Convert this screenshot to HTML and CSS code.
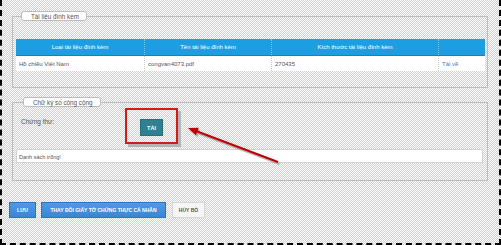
FILE: index.html
```html
<!DOCTYPE html>
<html lang="vi">
<head>
  <meta charset="UTF-8">
  <title>Chữ ký số</title>
  <link rel="stylesheet" href="styles.css">
</head>
<body>

  <div class="page">

    <fieldset class="group group-files">
      <legend>Tài liệu đính kèm</legend>
      <table class="files">
        <thead>
          <tr>
            <th class="c1">Loại tài liệu đính kèm</th>
            <th class="c2">Tên tài liệu đính kèm</th>
            <th class="c3">Kích thước tài liệu đính kèm</th>
            <th class="c4"></th>
          </tr>
        </thead>
        <tbody>
          <tr>
            <td>Hồ chiếu Việt Nam</td>
            <td>congvan4073.pdf</td>
            <td>270435</td>
            <td><a href="#">Tải về</a></td>
          </tr>
        </tbody>
      </table>
    </fieldset>

    <fieldset class="group group-sign">
      <legend>Chữ ký số công cộng</legend>
      <div class="cert-row">
        <span class="cert-label">Chứng thư:</span>
        <div class="highlight">
          <button class="btn-upload">TẢI</button>
        </div>
      </div>
      <div class="empty-list">Danh sách trống!</div>
    </fieldset>

    <div class="actions">
      <button class="btn btn-blue btn-save">LƯU</button>
      <button class="btn btn-blue btn-change">THAY ĐỔI GIẤY TỜ CHỨNG THỰC CÁ NHÂN</button>
      <button class="btn btn-cancel">HỦY BỎ</button>
    </div>

    <!-- callout arrow -->
    <svg class="arrow" width="501" height="245" viewBox="0 0 501 245">
      <g transform="translate(1.5 2)" fill="#9a9a9a" stroke="#9a9a9a" opacity="0.7">
        <line x1="278" y1="162" x2="196" y2="131" stroke-width="2"/>
        <polygon points="188,128 198.8,127.8 195.9,135.3" stroke="none"/>
      </g>
      <g fill="#c00000" stroke="#c00000">
        <line x1="278" y1="162" x2="196" y2="131" stroke-width="2"/>
        <polygon points="188,128 198.8,127.8 195.9,135.3" stroke="none"/>
      </g>
    </svg>

  </div>

</body>
</html>
```

FILE: styles.css
```css
body {
  margin: 0;
  font-family: "Liberation Sans", Arial, sans-serif;
  color: #444;
  background: #fff;
}

.page {
  position: relative;
  width: 501px;
  height: 245px;
  box-sizing: border-box;
  border: 2px dashed #000;
  border-top: none;
  background: repeating-conic-gradient(#d2d2d2 0 25%, #fbfbfb 0 50%) 0 0 / 2px 2px;
  padding-top: 11px;
}

.group {
  width: 476px;
  box-sizing: border-box;
  margin: 0 0 0 10px;
  border: 1px solid #bdbdbd;
  min-width: 0;
}

.group legend {
  height: 10px;
  line-height: 10px;
  box-sizing: border-box;
  background: #fff;
  border: 1px solid #bcbcbc;
  border-radius: 3px;
  font-size: 6.3px;
  color: #555;
  padding: 0 7px 0 9px;
}

.group-files {
  padding: 18px 4px 16px 3px;
}

.group-files legend {
  margin-left: 5px;
}

.files {
  width: 466px;
  border-collapse: collapse;
  table-layout: fixed;
  font-size: 6px;
}

.files th {
  height: 16px;
  padding: 0;
  background: #1c9fe2;
  color: #fff;
  font-weight: normal;
  text-align: center;
  border-left: 1px dotted #7cc6ee;
  border-bottom: 1px solid #5a63a8;
}

.files th:first-child {
  border-left: none;
}

.files .c1 { width: 128px; }
.files .c2 { width: 126px; }
.files .c3 { width: 166px; }
.files .c4 { width: 46px; }

.files td {
  height: 15px;
  padding: 0 3px;
  background: #fff;
  color: #555;
  border-left: 1px dotted #c8c8c8;
  white-space: nowrap;
}

.files td:first-child {
  border-left: none;
}

.files a {
  color: #5a78b0;
  text-decoration: none;
}

.group-sign {
  margin-top: 9px;
  padding: 1px 4px 17px 3px;
}

.group-sign legend {
  margin-left: 7px;
}

.cert-row {
  display: flex;
  align-items: flex-start;
}

.cert-label {
  font-size: 6.5px;
  color: #555;
  margin: 10px 0 0 5px;
  width: 104px;
}

.highlight {
  width: 53px;
  height: 36px;
  box-sizing: border-box;
  border: 2px solid #d21c1c;
  box-shadow: 3px 3px 0 #b5b5b5;
  display: flex;
  align-items: center;
  justify-content: center;
  padding-top: 3px;
}

.btn-upload {
  width: 23px;
  height: 17px;
  padding: 0;
  border: 1px solid #24707e;
  background: #2f8090;
  color: #fff;
  font-family: inherit;
  font-size: 5.5px;
  font-weight: bold;
}

.empty-list {
  margin-top: 5px;
  height: 14px;
  line-height: 14px;
  box-sizing: border-box;
  background: #fff;
  border: 1px solid #d4d4d4;
  padding-left: 2px;
  font-size: 5.5px;
  color: #555;
}

.actions {
  display: flex;
  gap: 5px;
  margin-top: 21px;
  padding-left: 7px;
}

.btn {
  height: 16px;
  padding: 0;
  font-family: inherit;
  font-size: 5px;
  font-weight: bold;
  box-sizing: border-box;
}

.btn-blue {
  background: linear-gradient(#4d9be3, #3a86d4);
  border: 1px solid #2f74c0;
  color: #fff;
}

.btn-save {
  width: 27px;
}

.btn-change {
  width: 125px;
}

.btn-cancel {
  width: 33px;
  margin-left: 1px;
  background: #f6f6f6;
  border: 1px solid #d6d6d6;
  color: #555;
}

.arrow {
  position: absolute;
  left: -2px;
  top: 0;
  pointer-events: none;
}
```
